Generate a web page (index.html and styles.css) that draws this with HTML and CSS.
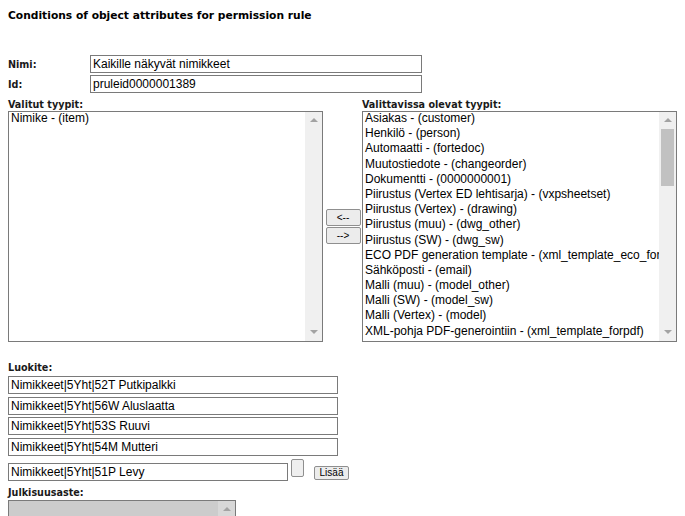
FILE: index.html
```html
<!DOCTYPE html>
<html>
<head>
<meta charset="utf-8">
<link rel="stylesheet" href="styles.css">
</head>
<body>
<h1 class="title">Conditions of object attributes for permission rule</h1>

<div class="fields">
  <label class="lbl">Nimi:</label>
  <div class="input wide">Kaikille näkyvät nimikkeet</div>
  <label class="lbl">Id:</label>
  <div class="input wide">pruleid0000001389</div>
</div>

<div class="types">
  <div class="lbl">Valitut tyypit:</div>
  <div></div>
  <div class="lbl">Valittavissa olevat tyypit:</div>

  <div class="listbox">
    <div class="items">
      <div class="item">Nimike - (item)</div>
    </div>
    <div class="sbar">
      <span class="arrow up"></span>
      <span class="track"></span>
      <span class="arrow down"></span>
    </div>
  </div>

  <div class="movebtns">
    <div class="btn">&lt;--</div>
    <div class="btn">--&gt;</div>
  </div>

  <div class="listbox">
    <div class="items">
      <div class="item">Asiakas - (customer)</div>
      <div class="item">Henkilö - (person)</div>
      <div class="item">Automaatti - (fortedoc)</div>
      <div class="item">Muutostiedote - (changeorder)</div>
      <div class="item">Dokumentti - (0000000001)</div>
      <div class="item">Piirustus (Vertex ED lehtisarja) - (vxpsheetset)</div>
      <div class="item">Piirustus (Vertex) - (drawing)</div>
      <div class="item">Piirustus (muu) - (dwg_other)</div>
      <div class="item">Piirustus (SW) - (dwg_sw)</div>
      <div class="item">ECO PDF generation template - (xml_template_eco_for</div>
      <div class="item">Sähköposti - (email)</div>
      <div class="item">Malli (muu) - (model_other)</div>
      <div class="item">Malli (SW) - (model_sw)</div>
      <div class="item">Malli (Vertex) - (model)</div>
      <div class="item">XML-pohja PDF-generointiin - (xml_template_forpdf)</div>
    </div>
    <div class="sbar">
      <span class="arrow up"></span>
      <span class="track"><span class="thumb"></span></span>
      <span class="arrow down"></span>
    </div>
  </div>
</div>

<div class="lbl luokite-lbl">Luokite:</div>
<div class="luokite">
  <div class="input class-in">Nimikkeet|5Yht|52T Putkipalkki</div>
  <div class="input class-in">Nimikkeet|5Yht|56W Aluslaatta</div>
  <div class="input class-in">Nimikkeet|5Yht|53S Ruuvi</div>
  <div class="input class-in">Nimikkeet|5Yht|54M Mutteri</div>
</div>
<div class="addrow">
  <div class="input last-in">Nimikkeet|5Yht|51P Levy</div>
  <div class="pick"></div>
  <div class="btn add">Lisää</div>
</div>

<div class="lbl julk-lbl">Julkisuusaste:</div>
<div class="graysel">
  <div class="gs-body"></div>
  <div class="gs-bar"><span class="arrow up"></span></div>
</div>
</body>
</html>
```
FILE: styles.css
```css
html, body {
  margin: 0;
  padding: 0;
  background: #fff;
}
body {
  padding: 8px;
  font-family: "Liberation Sans", Arial, sans-serif;
  font-size: 12px;
  color: #000;
  overflow: hidden;
  height: 500px;
}
.title {
  margin: 0;
  font-family: "DejaVu Sans", Verdana, sans-serif;
  font-weight: bold;
  font-size: 10.7px;
  line-height: 16px;
  height: 16px;
}
.lbl {
  font-family: "DejaVu Sans Condensed", "DejaVu Sans", Verdana, sans-serif;
  font-stretch: condensed;
  font-weight: bold;
  font-size: 10.7px;
  line-height: 13px;
  color: #1a1a1a;
}
.fields {
  margin-top: 31px;
  display: grid;
  grid-template-columns: 82px 332px;
  row-gap: 2px;
  align-items: center;
}
.input {
  box-sizing: border-box;
  height: 18px;
  border: 1px solid #7a7a7a;
  padding: 0 2px;
  line-height: 16px;
  font-size: 12px;
  white-space: nowrap;
  overflow: hidden;
  background: #fff;
}
.wide { width: 332px; }

.types {
  margin-top: 5px;
  display: grid;
  grid-template-columns: 315px 39px 315px;
  grid-template-rows: 13px 231px;
}
.listbox {
  box-sizing: border-box;
  height: 231px;
  border: 1px solid #7a7a7a;
  display: flex;
  background: #fff;
  overflow: hidden;
}
.items {
  flex: 1;
  min-width: 0;
  overflow: hidden;
  padding-left: 2px;
  margin-top: -1px;
}
.item {
  white-space: nowrap;
  line-height: 15.2px;
  height: 15.2px;
  font-size: 12px;
}
.sbar {
  width: 17px;
  background: #f0f0f0;
  display: flex;
  flex-direction: column;
  align-items: center;
}
.track {
  flex: 1;
  align-self: stretch;
  padding: 0 2px;
}
.thumb {
  display: block;
  height: 57px;
  background: #c1c1c1;
}
.arrow {
  display: block;
  width: 0;
  height: 0;
  border-left: 4px solid transparent;
  border-right: 4px solid transparent;
}
.arrow.up {
  border-bottom: 4px solid #a3a3a3;
  margin: 6px 0 7px;
}
.arrow.down {
  border-top: 4px solid #a3a3a3;
  margin: 6px 0 7px;
}
.movebtns {
  display: flex;
  flex-direction: column;
  align-items: center;
  justify-content: center;
  gap: 1px;
  padding-left: 1px;
}
.btn {
  box-sizing: border-box;
  width: 35px;
  height: 17px;
  border: 1px solid #8f8f8f;
  border-radius: 2px;
  background: #ececec;
  font-size: 10px;
  line-height: 15px;
  text-align: center;
}

.luokite-lbl { margin-top: 19px; }
.luokite {
  margin-top: 2px;
  display: flex;
  flex-direction: column;
  gap: 2.67px;
}
.class-in { width: 330px; }
.addrow {
  margin-top: 3px;
  display: flex;
  align-items: flex-start;
}
.last-in {
  width: 280px;
  margin-top: 4px;
}
.pick {
  box-sizing: border-box;
  width: 13px;
  height: 18px;
  margin-left: 3px;
  border: 1px solid #8f8f8f;
  border-radius: 2px;
  background: #efefef;
}
.add {
  width: 35px;
  height: 14px;
  margin-left: 10px;
  margin-top: 7px;
  line-height: 12px;
  font-size: 10px;
}
.julk-lbl { margin-top: 5px; }
.graysel {
  margin-top: 1px;
  box-sizing: border-box;
  width: 228px;
  height: 30px;
  border: 1px solid #7a7a7a;
  display: flex;
  background: #cccccc;
}
.gs-body { flex: 1; }
.gs-bar {
  width: 17px;
  background: #d8d8d8;
  display: flex;
  justify-content: center;
}
```
